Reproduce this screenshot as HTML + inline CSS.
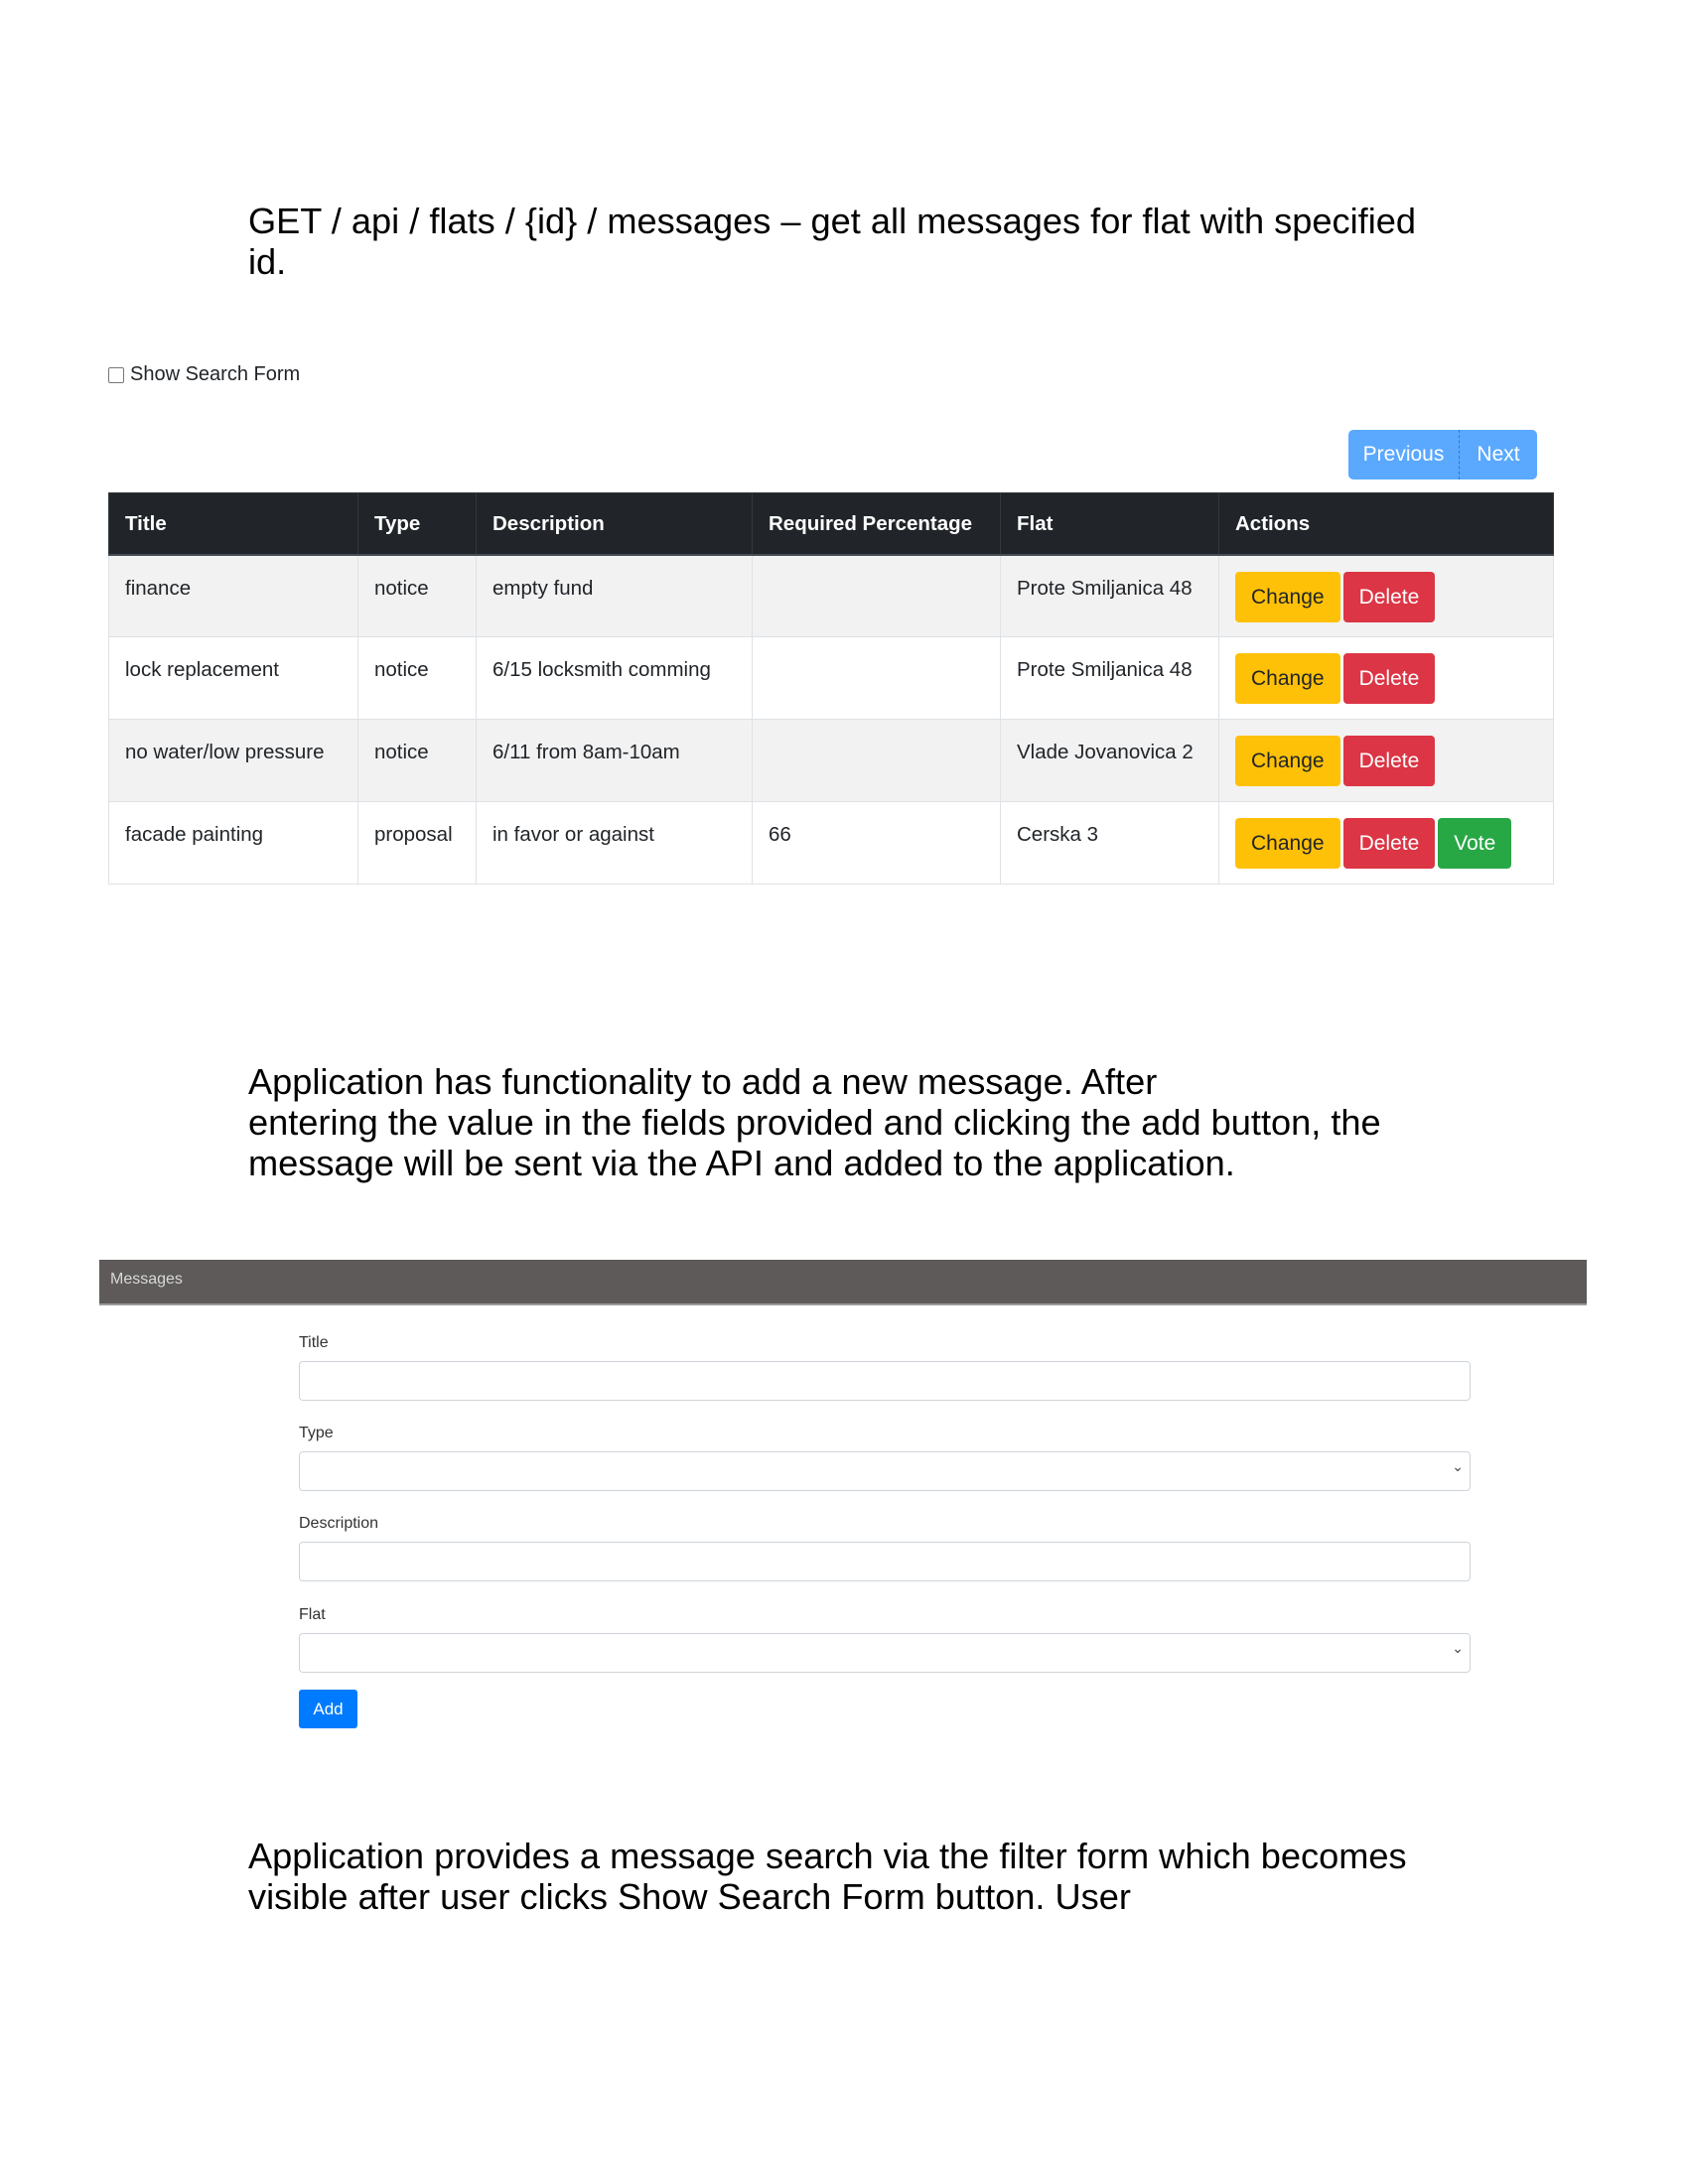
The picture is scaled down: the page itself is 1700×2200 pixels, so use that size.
<!DOCTYPE html>
<html><head><meta charset="utf-8">
<style>
*{box-sizing:border-box;margin:0;padding:0}
body{width:1700px;height:2200px;background:#fff;position:relative;font-family:"Liberation Sans",sans-serif;overflow:hidden}
.p{position:absolute;left:250px;font-size:36.2px;line-height:41px;color:#000}
.chk{position:absolute;left:109px;top:366px;font-size:20px;color:#212529;display:flex;align-items:center}
.chk span.b{width:16px;height:16px;border:1px solid #767676;border-radius:2px;margin-right:6px;display:inline-block}
.pg{position:absolute;left:1358px;top:433px;width:190px;height:50px;background:#5aa9ff;border-radius:5px;display:flex;color:#fff;font-size:21px}
.pg div{display:flex;align-items:center;justify-content:center}
table{position:absolute;left:109px;top:496px;width:1456px;border-collapse:collapse;font-size:20.5px;color:#212529}
th{background:#212529;color:#fff;text-align:left;height:62px;padding:2px 16px 0;font-weight:bold;border:1px solid #32383e;border-bottom:2px solid #454d55}
td{height:83px;vertical-align:top;padding:21px 16px 0;border:1px solid #dee2e6}
tr.o td{background:#f2f2f2}
.btn{display:inline-block;height:51px;line-height:51px;padding:0 16px;border-radius:4px;font-size:21px;margin-right:3px}
.y{background:#ffc107;color:#212529}.r{background:#dc3545;color:#fff}.g{background:#28a745;color:#fff}
td.a{padding-top:16px}
.bar{position:absolute;left:100px;top:1269px;width:1498px;height:46px;background:#5e5a5a;border-bottom:2px solid #9a9a9a;color:#d8d8d8;font-size:16px;padding:11px 11px}
.lbl{position:absolute;left:301px;font-size:16px;color:#333}
.in{position:absolute;left:301px;width:1180px;height:40px;border:1px solid #ced4da;border-radius:4px;background:#fff}
.sel:after{content:"⌄";position:absolute;right:6px;top:6px;font-size:14px;color:#444}
.add{position:absolute;left:301px;top:1702px;width:59px;height:39px;background:#007bff;color:#fff;border-radius:3px;font-size:17px;text-align:center;line-height:39px}
</style></head><body>
<div class="p" style="top:202px">GET / api / flats / {id} / messages – get all messages for flat with specified<br>id.</div>
<div class="chk"><span class="b"></span>Show Search Form</div>
<div class="pg"><div style="width:112px;border-right:1px dashed #1b7ae0">Previous</div><div style="flex:1">Next</div></div>
<table>
<tr><th style="width:251px">Title</th><th style="width:119px">Type</th><th style="width:278px">Description</th><th style="width:250px">Required Percentage</th><th style="width:220px">Flat</th><th>Actions</th></tr>
<tr class="o"><td>finance</td><td>notice</td><td>empty fund</td><td></td><td>Prote Smiljanica 48</td><td class="a"><span class="btn y">Change</span><span class="btn r">Delete</span></td></tr>
<tr><td>lock replacement</td><td>notice</td><td>6/15 locksmith comming</td><td></td><td>Prote Smiljanica 48</td><td class="a"><span class="btn y">Change</span><span class="btn r">Delete</span></td></tr>
<tr class="o"><td>no water/low pressure</td><td>notice</td><td>6/11 from 8am-10am</td><td></td><td>Vlade Jovanovica 2</td><td class="a"><span class="btn y">Change</span><span class="btn r">Delete</span></td></tr>
<tr><td>facade painting</td><td>proposal</td><td>in favor or against</td><td>66</td><td>Cerska 3</td><td class="a"><span class="btn y">Change</span><span class="btn r">Delete</span><span class="btn g">Vote</span></td></tr>
</table>
<div class="p" style="top:1069px">Application has functionality to add a new message. After<br>entering the value in the fields provided and clicking the add button, the<br>message will be sent via the API and added to the application.</div>
<div class="bar">Messages</div>
<div class="lbl" style="top:1344px">Title</div>
<div class="in" style="top:1371px"></div>
<div class="lbl" style="top:1435px">Type</div>
<div class="in sel" style="top:1462px"></div>
<div class="lbl" style="top:1526px">Description</div>
<div class="in" style="top:1553px"></div>
<div class="lbl" style="top:1618px">Flat</div>
<div class="in sel" style="top:1645px"></div>
<div class="add">Add</div>
<div class="p" style="top:1849px">Application provides a message search via the filter form which becomes<br>visible after user clicks Show Search Form button. User</div>
</body></html>
